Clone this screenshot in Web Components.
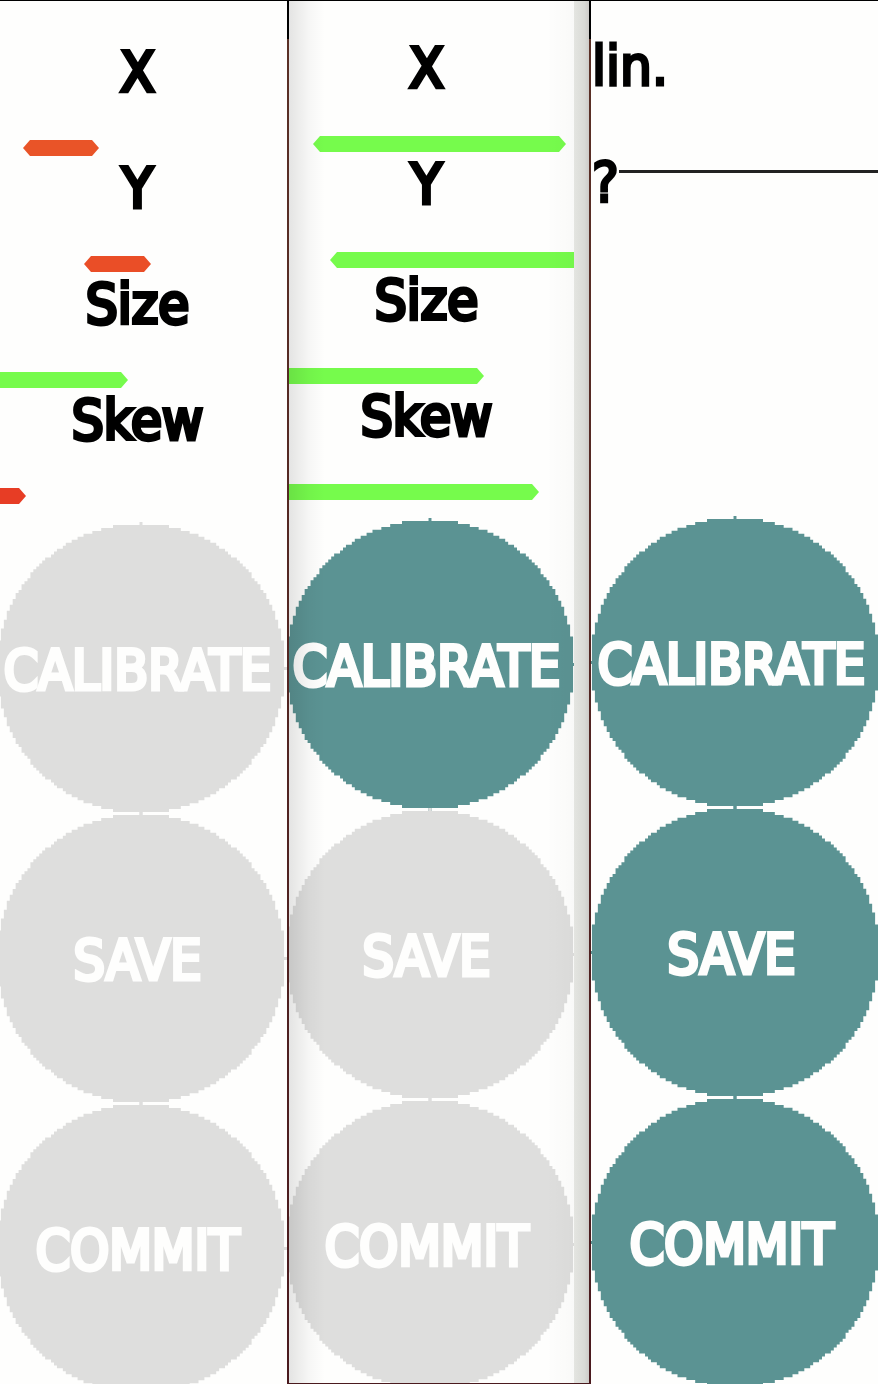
<!DOCTYPE html>
<html lang="en">
<head>
<meta charset="utf-8">
<title>Calibration</title>
<style>
  body { margin: 0; background: #fefefd; font-family: "DejaVu Sans Condensed", "Roboto", sans-serif; color: #000; }
</style>
</head>
<body>
<calibration-board>
  <calibration-panel style="--top: 39px; --shift: -5px">
    <score-row label="X" start="28" length="76" color="#e95428"></score-row>
    <score-row label="Y" start="89" length="67" color="#ea4e27"></score-row>
    <score-row label="Size" start="-20" length="153" color="#76fb4c"></score-row>
    <score-row label="Skew" start="-20" length="51" color="#e73d25"></score-row>
    <round-button slot="actions" disabled>CALIBRATE</round-button>
    <round-button slot="actions" disabled>SAVE</round-button>
    <round-button slot="actions" disabled>COMMIT</round-button>
  </calibration-panel>
  <calibration-panel framed style="--top: 35px; --shift: -5px">
    <score-row label="X" start="29" length="253" color="#76fb4c"></score-row>
    <score-row label="Y" start="46" length="280" color="#76fb4c"></score-row>
    <score-row label="Size" start="-20" length="220" color="#76fb4c"></score-row>
    <score-row label="Skew" start="-20" length="275" color="#76fb4c"></score-row>
    <round-button slot="actions">CALIBRATE</round-button>
    <round-button slot="actions" disabled>SAVE</round-button>
    <round-button slot="actions" disabled>COMMIT</round-button>
  </calibration-panel>
  <calibration-panel style="--top: 33px; --shift: -2px">
    <prompt-line>lin.</prompt-line>
    <prompt-line ruled>?</prompt-line>
    <round-button slot="actions">CALIBRATE</round-button>
    <round-button slot="actions">SAVE</round-button>
    <round-button slot="actions">COMMIT</round-button>
  </calibration-panel>
</calibration-board>

<script>
const shadow = (host, html) => {
  const t = document.createElement('template');
  t.innerHTML = html;
  const root = host.attachShadow({ mode: 'open' });
  root.append(t.content.cloneNode(true));
  return root;
};

/* Outline of a circle rasterised on a 99 x 99 cell grid, as a CSS polygon. */
const cellCircle = (() => {
  const r = 49, n = 2 * r + 1, right = [], left = [];
  const pc = v => (v / n * 100).toFixed(3) + '%';
  for (let y = 0; y < n; y++) {
    const w = Math.floor(Math.sqrt(r * r - (y - r) ** 2));
    right.push(`${pc(r + w + 1)} ${pc(y)}`, `${pc(r + w + 1)} ${pc(y + 1)}`);
    left.unshift(`${pc(r - w)} ${pc(y + 1)}`, `${pc(r - w)} ${pc(y)}`);
  }
  return `polygon(${right.concat(left).join(',')})`;
})();

customElements.define('calibration-board', class extends HTMLElement {
  constructor() {
    super();
    shadow(this, `<style>
      :host { display: grid; grid-template-columns: 287fr 304fr 287fr; height: 100vh;
        box-sizing: border-box; border-top: 1px solid #000; overflow: hidden; }
    </style><slot></slot>`);
  }
});

customElements.define('calibration-panel', class extends HTMLElement {
  constructor() {
    super();
    shadow(this, `<style>
      :host { display: flex; position: relative; min-width: 0; overflow: hidden; box-sizing: border-box; background: #fefefd; }
      .view { flex: 1; min-width: 0; overflow: hidden; }
      .deck { width: 292px; margin-left: var(--shift); padding-top: var(--top); }
      .rows { min-height: 464px; margin-bottom: 18px; }
      .gutter { display: none; }
      :host([framed]) { border: 2px solid; border-top: 0; border-bottom-width: 1px;
        border-image: linear-gradient(#000 40px, #5a3026 40px, #4a1a1e) 2 2 1 2; }
      :host([framed]) .gutter { display: block; flex: 0 0 15px; background: linear-gradient(90deg, #e4e5e1, #d9dad6 70%, #cdcbc8); }
      :host([framed])::after { content: ""; position: absolute; inset: 0 15px 0 0; pointer-events: none;
        background: linear-gradient(90deg, rgba(0,0,0,.1), rgba(0,0,0,.03) 20px, transparent 36px, transparent calc(100% - 28px), rgba(0,0,0,.02)); }
    </style>
    <div class="view"><div class="deck">
      <div class="rows"><slot></slot></div>
      <slot name="actions"></slot>
    </div></div>
    <div class="gutter"></div>`);
  }
});

customElements.define('score-row', class extends HTMLElement {
  constructor() {
    super();
    const label = this.getAttribute('label');
    shadow(this, `<style>
      :host { display: block; height: 116px; }
      .label { height: 64px; padding-right: 7px; text-align: center; font-size: 56px; line-height: 64px; -webkit-text-stroke: 4px #000; }
      .bar { height: 16px; margin-top: 36px; margin-left: ${this.getAttribute('start')}px; width: ${this.getAttribute('length')}px;
        background: ${this.getAttribute('color')};
        clip-path: polygon(0 50%, 7px 0, calc(100% - 7px) 0, 100% 50%, calc(100% - 7px) 100%, 7px 100%); }
    </style>
    <div class="label">${label}</div>
    <div class="bar" role="img" aria-label="${label} score"></div>`);
  }
});

customElements.define('prompt-line', class extends HTMLElement {
  constructor() {
    super();
    shadow(this, `<style>
      :host { display: flex; height: 116px; padding-left: 3px; font-size: 56px; line-height: 64px; -webkit-text-stroke: 3px #000; }
      .rule { display: none; flex: 1; height: 3px; margin-top: 20px; background: #222; }
      :host([ruled]) .rule { display: block; }
    </style><span><slot></slot></span><div class="rule"></div>`);
  }
});

customElements.define('round-button', class extends HTMLElement {
  constructor() {
    super();
    shadow(this, `<style>
      :host { display: block; height: 290px; }
      button { display: block; width: 292px; height: 293px; margin: 0; border: 0; padding: 2px 7px 0 0;
        font: inherit; font-size: 55px; line-height: 64px; text-align: center; white-space: nowrap;
        color: #fefefd; -webkit-text-stroke: 4px #fefefd; background: #5b9393; clip-path: ${cellCircle}; cursor: pointer; }
      button:disabled { background: #dededd; cursor: default; }
    </style>
    <button type="button"${this.hasAttribute('disabled') ? ' disabled' : ''}><slot></slot></button>`);
  }
});
</script>
</body>
</html>
